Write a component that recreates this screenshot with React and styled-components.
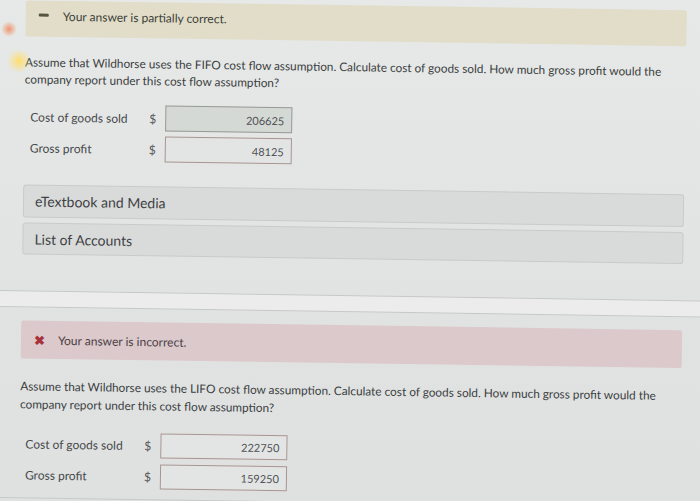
import React from "react";
import styled, { createGlobalStyle } from "styled-components";

const GlobalStyle = createGlobalStyle`
  html, body {
    margin: 0;
    padding: 0;
    background: #e2e4e3;
  }
  body {
    font-family: Lato, "Open Sans", "Liberation Sans", sans-serif;
    color: #3b3e41;
  }
`;

// photo frame: the screen was shot slightly tilted
const Frame = styled.div`
  position: relative;
  width: 700px;
  height: 501px;
  overflow: hidden;
  background: linear-gradient(180deg, #e7e9e8 0%, #e1e3e2 60%, #dfe1e0 100%);
`;

const Page = styled.div`
  width: 720px;
  transform: rotate(0.85deg);
  transform-origin: 0 0;
  display: flex;
  flex-direction: column;
`;

const Section = styled.div`
  padding: 0 32px 0 26px;
  display: flex;
  flex-direction: column;
`;

const Banner = styled.div`
  height: ${(p) => p.$h}px;
  width: 661px;
  box-sizing: border-box;
  display: flex;
  align-items: ${(p) => (p.$top ? "flex-start" : "center")};
  padding: ${(p) => (p.$top ? "8px 0 0 13px" : "0 0 0 13px")};
  background: ${(p) => p.$bg};
  border-radius: 2px;
  font-size: 12px;
  color: ${(p) => p.$fg};
`;

const Dash = styled.span`
  width: 10px;
  height: 3px;
  margin-top: 5px;
  background: #55553f;
  border-radius: 1px;
  margin-right: 14px;
`;

const Cross = styled.span`
  width: 11px;
  margin-right: 13px;
  font-size: 13px;
  font-weight: 900;
  color: #a8323a;
  line-height: 1;
`;

const Question = styled.p`
  margin: ${(p) => p.$mt}px 0 0 0;
  font-size: 11.8px;
  line-height: ${(p) => p.$lh}px;
  width: 650px;
  color: #3b3e41;
`;

const Rows = styled.div`
  margin-top: ${(p) => p.$mt}px;
  display: flex;
  flex-direction: column;
  gap: ${(p) => p.$gap}px;
`;

const Row = styled.div`
  display: grid;
  grid-template-columns: 119px 16px 127px;
  align-items: center;
  padding-left: ${(p) => p.$indent}px;
  height: ${(p) => p.$h}px;
`;

const Label = styled.span`
  font-size: 12px;
  color: #45484b;
`;

const Dollar = styled.span`
  font-size: 12px;
  color: #55585b;
`;

const Field = styled.div`
  height: 100%;
  box-sizing: border-box;
  border: 1px solid ${(p) => p.$border};
  background: ${(p) => p.$bg};
  display: flex;
  align-items: center;
  justify-content: flex-end;
  padding-right: 7px;
  font-size: 11px;
  color: #4f5255;
`;

const Bar = styled.div`
  margin-top: ${(p) => p.$mt}px;
  width: 661px;
  height: ${(p) => p.$h}px;
  box-sizing: border-box;
  display: flex;
  align-items: center;
  padding-left: 11px;
  background: #d9dbda;
  border: 1px solid #c9cbca;
  border-radius: 3px;
  font-size: 14px;
  color: #3e4144;
`;

const Divider = styled.div`
  margin-top: 36px;
  height: 15px;
  border-top: 1px solid #c6c8c7;
  border-bottom: 1px solid #c6c8c7;
  background: #ebeceb;
  margin-bottom: 13px;
`;

const BottomEdge = styled.div`
  margin-top: 10px;
  height: 1px;
  background: #c8cac9;
`;

const Glow = styled.span`
  position: absolute;
  left: ${(p) => p.$x}px;
  top: ${(p) => p.$y}px;
  width: ${(p) => p.$r * 2}px;
  height: ${(p) => p.$r * 2}px;
  border-radius: 50%;
  background: radial-gradient(circle, ${(p) => p.$c} 0%, rgba(255, 230, 150, 0) 70%);
  pointer-events: none;
`;

function AnswerRows({ mt, gap, h, cost, profit, firstFilled }) {
  return (
    <Rows $mt={mt} $gap={gap}>
      <Row $indent={6} $h={h}>
        <Label>Cost of goods sold</Label>
        <Dollar>$</Dollar>
        <Field
          $bg={firstFilled ? "#d5d9d6" : "#e3e5e4"}
          $border={firstFilled ? "#959b97" : "#a89592"}
        >
          {cost}
        </Field>
      </Row>
      <Row $indent={6} $h={h}>
        <Label>Gross profit</Label>
        <Dollar>$</Dollar>
        <Field $bg="#e3e5e4" $border="#a89592">
          {profit}
        </Field>
      </Row>
    </Rows>
  );
}

export default function App() {
  return (
    <>
      <GlobalStyle />
      <Frame>
        <Page>
          <Section>
            <Banner $h={36} $top $bg="#e1ddc9" $fg="#3d3f38">
              <Dash />
              Your answer is partially correct.
            </Banner>
            <Question $mt={17} $lh={17}>
              Assume that Wildhorse uses the FIFO cost flow assumption. Calculate cost of goods sold. How much gross
              profit would the company report under this cost flow assumption?
            </Question>
            <AnswerRows mt={16} gap={5} h={26} cost="206625" profit="48125" firstFilled />
            <Bar $mt={24} $h={33}>eTextbook and Media</Bar>
            <Bar $mt={5} $h={32}>List of Accounts</Bar>
          </Section>
          <Divider />
          <Section>
            <Banner $h={38} $bg="#dcc9cc" $fg="#4a3e44">
              <Cross>✖</Cross>
              Your answer is incorrect.
            </Banner>
            <Question $mt={19} $lh={18}>
              Assume that Wildhorse uses the LIFO cost flow assumption. Calculate cost of goods sold. How much gross
              profit would the company report under this cost flow assumption?
            </Question>
            <AnswerRows mt={18} gap={6} h={25} cost="222750" profit="159250" />
          </Section>
          <BottomEdge />
        </Page>
        <Glow $x={1} $y={21} $r={8} $c="rgba(240, 140, 100, 0.9)" />
        <Glow $x={7} $y={49} $r={12} $c="rgba(255, 222, 110, 1)" />
      </Frame>
    </>
  );
}
